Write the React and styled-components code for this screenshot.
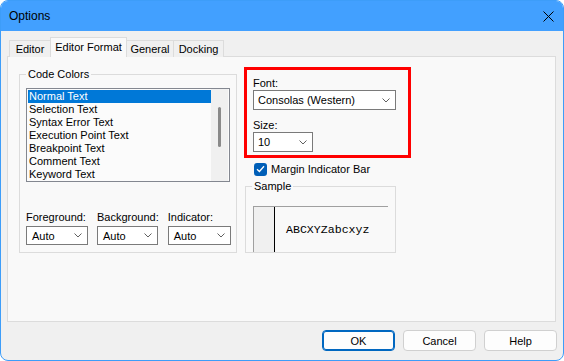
import React from 'react';
import styled, { createGlobalStyle } from 'styled-components';

const GlobalStyle = createGlobalStyle`
  html, body {
    margin: 0;
    padding: 0;
    background: #ffffff;
  }
  body {
    font-family: "Liberation Sans", Arial, sans-serif;
    font-size: 11px;
    color: #000;
  }
`

const Window = styled.div`
  width: 564px;
  height: 361px;
  box-sizing: border-box;
  border: 1px solid #3d9df9;
  border-radius: 8px;
  background: #f0f0f0;
  overflow: hidden;
  display: flex;
  flex-direction: column;
`

const TitleBar = styled.div`
  height: 30px;
  flex-shrink: 0;
  background: #42a0ff;
  display: flex;
  align-items: center;
  justify-content: space-between;
  padding: 0 9px 0 8px;
`

const Title = styled.span`
  font-size: 12px;
  color: #000;
`

const Body = styled.div`
  padding: 7px 6px 0 6px;
  display: flex;
  flex-direction: column;
`

const Tabs = styled.div`
  display: flex;
  align-items: flex-end;
  height: 19px;
  margin-left: 2px;
  margin-bottom: -1px;
  position: relative;
  z-index: 1;
`

const Tab = styled.div`
  box-sizing: border-box;
  width: ${p => p.$w}px;
  height: ${p => (p.$active ? 20 : 17)}px;
  margin-left: -1px;
  border: 1px solid #dcdcdc;
  border-bottom: none;
  background: ${p => (p.$active ? '#f9f9f9' : '#f0f0f0')};
  display: flex;
  align-items: center;
  justify-content: center;
  padding-bottom: ${p => (p.$active ? 2 : 0)}px;
  &:first-child { margin-left: 0; }
`

const Panel = styled.div`
  box-sizing: border-box;
  width: 549px;
  height: 266px;
  border: 1px solid #dcdcdc;
  background: #f9f9f9;
  padding: 10px 0 0 11px;
  display: flex;
  align-items: flex-start;
  gap: 7px;
`

const Group = styled.div`
  position: relative;
  box-sizing: border-box;
  width: ${p => p.$w}px;
  height: ${p => p.$h}px;
  margin-top: ${p => p.$mt || 0}px;
  margin-left: ${p => p.$ml || 0}px;
  border: 1px solid #dcdcdc;
  padding: ${p => p.$pad};
  display: flex;
  flex-direction: column;
`

const Legend = styled.span`
  position: absolute;
  top: -8px;
  left: 6px;
  padding: 0 2px;
  line-height: 14px;
  background: #f9f9f9;
`

const ListBox = styled.div`
  box-sizing: border-box;
  width: 204px;
  height: 94px;
  border: 1px solid #838790;
  background: #fbfbfb;
  display: flex;
`

const Items = styled.div`
  width: 183px;
  padding: 1px 0 0 1px;
`

const Item = styled.div`
  height: 13px;
  line-height: 13px;
  padding-left: 1px;
  white-space: nowrap;
  background: ${p => (p.$selected ? '#0078d7' : 'transparent')};
  color: ${p => (p.$selected ? '#fff' : '#000')};
`

const ScrollTrack = styled.div`
  width: 17px;
  background: #f0f0f0;
  display: flex;
  justify-content: center;
  padding-top: 18px;
`

const Thumb = styled.div`
  width: 3px;
  height: 40px;
  border-radius: 2px;
  background: #8a8a8a;
`

const FieldRow = styled.div`
  display: flex;
  gap: 9px;
  margin-top: 28px;
`

const Field = styled.div`
  display: flex;
  flex-direction: column;
  gap: 2px;
`

const Label = styled.div`
  line-height: 14px;
  margin-top: ${p => p.$mt || 0}px;
`

const ComboBox = styled.div`
  box-sizing: border-box;
  width: ${p => p.$w}px;
  height: ${p => p.$h || 20}px;
  border: 1px solid #7a7a7a;
  background: #ffffff;
  display: flex;
  align-items: center;
  justify-content: space-between;
  padding: 0 5px 0 ${p => p.$pl || 5}px;
`

const RightColumn = styled.div`
  display: flex;
  flex-direction: column;
`

const Highlight = styled.div`
  box-sizing: border-box;
  width: 167px;
  height: 91px;
  border: 3px solid #ff0000;
  padding: 6px 0 0 6px;
  display: flex;
  flex-direction: column;
`

const CheckRow = styled.div`
  display: flex;
  align-items: center;
  gap: 4px;
  height: 16px;
  margin: 3px 0 0 10px;
`

const CheckBox = styled.div`
  width: 13px;
  height: 13px;
  border-radius: 3px;
  background: #005fb8;
  display: flex;
  align-items: center;
  justify-content: center;
`

const SampleBox = styled.div`
  box-sizing: border-box;
  width: 135px;
  height: 48px;
  margin: 9px 0 0 6px;
  border-top: 1px solid #a0a0a0;
  border-left: 1px solid #a0a0a0;
  display: flex;
`

const Gutter = styled.div`
  width: 20px;
  background: #f0f0f0;
  border-right: 1px solid #000;
`

const SampleText = styled.div`
  display: flex;
  align-items: center;
  padding-left: 11px;
  font-family: "Liberation Mono", "DejaVu Sans Mono", monospace;
  font-size: 11.6px;
  color: #000;
`

const ButtonRow = styled.div`
  display: flex;
  justify-content: flex-end;
  gap: 8px;
  margin-top: 8px;
`

const Button = styled.button`
  box-sizing: border-box;
  width: 73px;
  height: 21px;
  border-radius: 4px;
  border: 1px solid ${p => (p.$primary ? '#0067c0' : '#d0d0d0')};
  box-shadow: ${p => (p.$primary ? 'inset 0 0 0 1px #0067c0' : 'none')};
  background: #fdfdfd;
  font-family: "Liberation Sans", Arial, sans-serif;
  font-size: 11px;
  color: #000;
  padding: 0;
`

const Chevron = () => (
  <svg width="8" height="5" viewBox="0 0 8 5">
    <path d="M0.5 0.5 L4 4 L7.5 0.5" fill="none" stroke="#606060" strokeWidth="1" />
  </svg>
)

const Combo = ({ value, ...rest }) => (
  <ComboBox {...rest}>
    <span>{value}</span>
    <Chevron />
  </ComboBox>
)

const colorItems = [
  'Normal Text',
  'Selection Text',
  'Syntax Error Text',
  'Execution Point Text',
  'Breakpoint Text',
  'Comment Text',
  'Keyword Text',
]

export default function App() {
  return (
    <>
      <GlobalStyle />
      <Window>
        <TitleBar>
          <Title>Options</Title>
          <svg width="11" height="11" viewBox="0 0 11 11">
            <path d="M0.5 0.5 L10.5 10.5 M10.5 0.5 L0.5 10.5" stroke="#000" strokeWidth="1" />
          </svg>
        </TitleBar>
        <Body>
          <Tabs>
            <Tab $w={42}>Editor</Tab>
            <Tab $w={77} $active>Editor Format</Tab>
            <Tab $w={48}>General</Tab>
            <Tab $w={51}>Docking</Tab>
          </Tabs>
          <Panel>
            <Group $w={218} $h={179} $mt={7} $pad="13px 6px 0 6px">
              <Legend>Code Colors</Legend>
              <ListBox>
                <Items>
                  {colorItems.map((t, i) => (
                    <Item key={t} $selected={i === 0}>{t}</Item>
                  ))}
                </Items>
                <ScrollTrack>
                  <Thumb />
                </ScrollTrack>
              </ListBox>
              <FieldRow>
                <Field>
                  <Label>Foreground:</Label>
                  <Combo $w={62} $h={19} value="Auto" />
                </Field>
                <Field>
                  <Label>Background:</Label>
                  <Combo $w={61} $h={19} value="Auto" />
                </Field>
                <Field>
                  <Label>Indicator:</Label>
                  <Combo $w={63} $h={19} value="Auto" />
                </Field>
              </FieldRow>
            </Group>
            <RightColumn>
              <Highlight>
                <Label>Font:</Label>
                <Combo $w={143} $pl={4} value="Consolas (Western)" />
                <Label $mt={8}>Size:</Label>
                <Combo $w={60} $pl={4} value="10" />
              </Highlight>
              <CheckRow>
                <CheckBox>
                  <svg width="9" height="8" viewBox="0 0 9 8">
                    <path d="M1 4.2 L3.4 6.5 L8 1.2" fill="none" stroke="#fff" strokeWidth="1.3" />
                  </svg>
                </CheckBox>
                <span>Margin Indicator Bar</span>
              </CheckRow>
              <Group $w={151} $h={67} $mt={9} $ml={1} $pad="10px 0 0 1px">
                <Legend>Sample</Legend>
                <SampleBox>
                  <Gutter />
                  <SampleText>ABCXYZabcxyz</SampleText>
                </SampleBox>
              </Group>
            </RightColumn>
          </Panel>
          <ButtonRow>
            <Button $primary>OK</Button>
            <Button>Cancel</Button>
            <Button>Help</Button>
          </ButtonRow>
        </Body>
      </Window>
    </>
  )
}
